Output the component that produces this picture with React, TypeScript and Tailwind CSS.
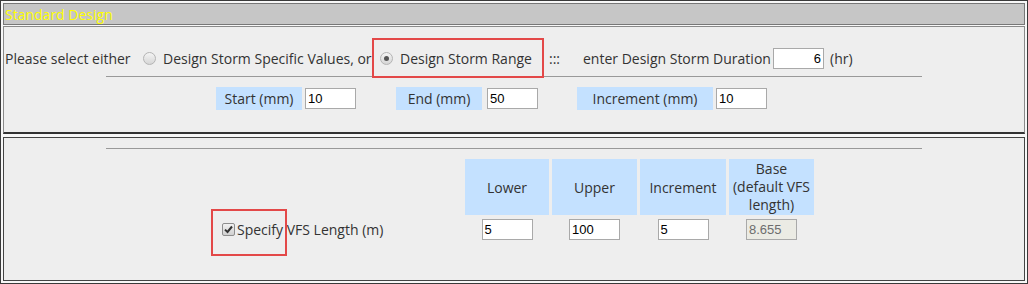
import React from "react";

const font = { fontFamily: '"Open Sans", "DejaVu Sans", sans-serif' };

// little grey radio, drawn instead of the native one
const Radio = ({ checked }: { checked?: boolean }) => (
  <span className="inline-flex w-[13px] h-[13px] rounded-full border border-[#b4b4b4] bg-gradient-to-b from-[#f4f4f4] to-[#d6d6d6] items-center justify-center shrink-0">
    {checked && <span className="w-[5px] h-[5px] rounded-full bg-[#555]" />}
  </span>
);

const Check = () => (
  <span className="inline-flex w-[13px] h-[13px] rounded-[2px] border border-[#8e8e8e] bg-gradient-to-b from-[#f2f2f2] to-[#d0d0d0] items-center justify-center shrink-0">
    <svg width="9" height="9" viewBox="0 0 9 9">
      <path d="M1 4.6 L3.5 7 L8 1.5" fill="none" stroke="#333" strokeWidth="2" />
    </svg>
  </span>
);

const Field = ({
  value,
  right,
  disabled,
}: {
  value: string;
  right?: boolean;
  disabled?: boolean;
}) => (
  <div
    className={`w-[51px] h-[21px] border border-[#a9a9a9] flex items-center px-[2px] text-[13px] leading-none shrink-0 ${
      disabled ? "bg-[#ebebe4] text-[#6d6d6d]" : "bg-white text-black"
    } ${right ? "justify-end" : ""}`}
    style={{ fontFamily: '"Liberation Sans", Arial, sans-serif' }}
  >
    {value}
  </div>
);

const Label = ({ text, w }: { text: string; w: string }) => (
  <div className={`${w} h-[23px] bg-[#c4e1ff] flex items-center justify-center shrink-0`}>{text}</div>
);

export default function App() {
  return (
    <div
      className="relative w-[1028px] h-[284px] border border-[#3a3a3a] bg-[#f7f7f7] p-[2px] flex flex-col text-[14px] text-[#333] whitespace-nowrap"
      style={font}
    >
      {/* title bar */}
      <div className="h-[22px] border border-[#777] bg-[#c6c6c6] flex items-center pl-[1px] text-[#ffff00]">
        Standard Design
      </div>

      {/* storm panel */}
      <div className="mt-[1px] h-[108px] border border-[#8a8a8a] border-b-[#333] border-b-2 bg-[#eeeeee] flex flex-col">
        <div className="mt-[20px] h-[22px] flex items-center pl-[1px]">
          <span className="w-[138px]">Please select either</span>
          <Radio />
          <span className="ml-[7px] w-[217px]">Design Storm Specific Values, or</span>
          <Radio checked />
          <span className="ml-[7px] w-[149px]">Design Storm Range</span>
          <span className="w-[34px]">:::</span>
          <span className="w-[190px]">enter Design Storm Duration</span>
          <Field value="6" right />
          <span className="ml-[6px]">(hr)</span>
        </div>
        <div className="mt-[7px] mx-auto w-[816px] h-px bg-[#999]" />
        <div className="mt-[10px] flex items-center pl-[212px]">
          <Label text="Start (mm)" w="w-[86px]" />
          <span className="ml-[3px]">
            <Field value="10" />
          </span>
          <span className="ml-[40px]">
            <Label text="End (mm)" w="w-[86px]" />
          </span>
          <span className="ml-[5px]">
            <Field value="50" />
          </span>
          <span className="ml-[39px]">
            <Label text="Increment (mm)" w="w-[136px]" />
          </span>
          <span className="ml-[3px]">
            <Field value="10" />
          </span>
        </div>
      </div>

      {/* VFS panel */}
      <div className="mt-[3px] h-[144px] border border-[#444] bg-[#eeeeee] flex flex-col">
        <div className="mt-[10px] mx-auto w-[816px] h-px bg-[#999]" />
        <div className="mt-[10px] ml-[208px] grid grid-cols-[250px_84px_85px_86px_85px] gap-x-[3px] gap-y-[4px]">
          <div />
          {["Lower", "Upper", "Increment"].map((t) => (
            <div key={t} className="h-[56px] bg-[#c4e1ff] flex items-center justify-center">
              {t}
            </div>
          ))}
          <div className="h-[56px] bg-[#c4e1ff] flex flex-col items-center justify-center text-center leading-[18px]">
            <span>Base</span>
            <span>(default VFS</span>
            <span>length)</span>
          </div>

          <div className="h-[21px] flex items-center pl-[10px] gap-[2px]">
            <Check />
            <span>Specify VFS Length (m)</span>
          </div>
          <div className="flex justify-center">
            <Field value="5" />
          </div>
          <div className="flex justify-center">
            <Field value="100" />
          </div>
          <div className="flex justify-center">
            <Field value="5" />
          </div>
          <div className="flex justify-center">
            <Field value="8.655" disabled />
          </div>
        </div>
      </div>

      {/* annotation boxes */}
      <div className="absolute left-[371px] top-[37px] w-[172px] h-[40px] border-2 border-[#e34848]" />
      <div className="absolute left-[210px] top-[208px] w-[76px] h-[47px] border-2 border-[#e34848]" />
    </div>
  );
}
